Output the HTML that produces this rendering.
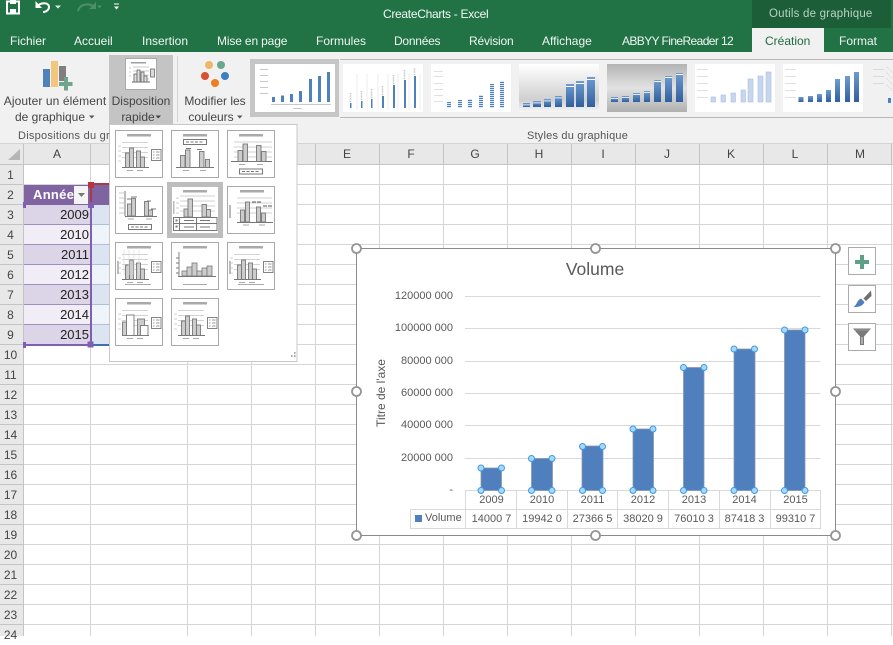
<!DOCTYPE html>
<html><head><meta charset="utf-8"><style>
html,body{margin:0;padding:0}
body{width:893px;height:636px;overflow:hidden;position:relative;background:#fff;font-family:"Liberation Sans",sans-serif;color:#444}
.a{position:absolute;white-space:nowrap}
.tab{position:absolute;top:33px;font-size:12px;line-height:16px;color:#f0f6f2;white-space:nowrap}
.rb{position:absolute;font-size:12px;line-height:16px;color:#444;text-align:center;white-space:nowrap}
.ch{position:absolute;top:145px;height:19px;line-height:19px;font-size:12px;color:#444;text-align:center}
.rh{position:absolute;left:0;width:21px;height:20px;line-height:20px;font-size:12px;color:#444;text-align:center}
.yr{position:absolute;left:25px;width:64px;height:19px;line-height:20px;font-size:13px;color:#222;text-align:right}
.ax{position:absolute;width:80px;left:373px;text-align:right;font-size:11px;line-height:14px;color:#595959}
.tb{position:absolute;width:51px;text-align:center;font-size:11px;line-height:14px;color:#595959}
</style></head><body>
<svg class="a" style="left:0;top:0" width="893" height="636" viewBox="0 0 893 636">
<defs>
<symbol id="b" viewBox="0 0 80 48"><g fill="#4f81bd"><rect x="17" y="33" width="3" height="5"/><rect x="26" y="31.500" width="3" height="6.500"/><rect x="35" y="30" width="3" height="8"/><rect x="44" y="27" width="3" height="11"/><rect x="54" y="15" width="3" height="23"/><rect x="63" y="12" width="3" height="26"/><rect x="72" y="8" width="3" height="30"/></g><g fill="#bbb"><rect x="5" y="5" width="8" height=".8"/><rect x="5" y="11" width="8" height=".8"/><rect x="5" y="17" width="8" height=".8"/><rect x="5" y="23" width="8" height=".8"/><rect x="5" y="29" width="8" height=".8"/><rect x="16" y="40" width="60" height=".8"/><rect x="38" y="44" width="9" height=".8"/></g></symbol>
<linearGradient id="g1" x1="0" y1="0" x2="0" y2="1"><stop offset="0" stop-color="#fff"/><stop offset=".75" stop-color="#cfcfcf"/><stop offset="1" stop-color="#f6f6f6"/></linearGradient>
<linearGradient id="g2" x1="0" y1="0" x2="0" y2="1"><stop offset="0" stop-color="#b4b4b4"/><stop offset=".5" stop-color="#e2e2e2"/><stop offset="1" stop-color="#b0b0b0"/></linearGradient>
<linearGradient id="g3" x1="0" y1="0" x2="0" y2="1"><stop offset="0" stop-color="#6f9bd0"/><stop offset="1" stop-color="#2f5f9e"/></linearGradient>
<pattern id="st" width="3" height="2" patternUnits="userSpaceOnUse"><rect width="3" height="1.200" fill="#4f81bd"/></pattern>
</defs>
<!-- green bar -->
<rect x="0" y="0" width="893" height="52" fill="#217346"/>
<rect x="752" y="0" width="139" height="28" fill="#1b5e38"/>
<rect x="752" y="28" width="72" height="24" fill="#f1f1f1"/>
<!-- ribbon -->
<rect x="0" y="52" width="893" height="92" fill="#f1f1f1"/>
<rect x="109" y="55" width="64" height="70" fill="#c4c4c4"/>
<rect x="177" y="56" width="1" height="66" fill="#d2d2d2"/>
<!-- QAT save -->
<path d="M7 1.500H19V13.500H7Z" fill="none" stroke="#fff" stroke-width="2"/><rect x="10" y="9" width="6" height="4" fill="#fff"/><rect x="10" y="0" width="6" height="4" fill="#fff"/>
<path d="M37 7C40 2 49 2 49 7C49 10 46 12 43 12" fill="none" stroke="#fff" stroke-width="2"/><path d="M35.500 1V8H42Z" fill="#fff"/>
<path d="M55 5.500h6l-3 3z" fill="#dfeee5"/>
<path d="M94 7C91 3 80 3 78 11" fill="none" stroke="#4b8f6b" stroke-width="2"/><path d="M96 2V9H89Z" fill="#4b8f6b"/>
<path d="M97 5.500h5l-2.500 3z" fill="#4b8f6b"/>
<rect x="114" y="3.500" width="5" height="1" fill="#fff"/><path d="M114 6.500h5l-2.500 3z" fill="#fff"/>
<!-- Ajouter icon -->
<rect x="43" y="69" width="7" height="18" fill="#4f81bd"/><rect x="51" y="61" width="7" height="26" fill="#f0c77d"/><rect x="59" y="66" width="7" height="15" fill="#7f7f7f"/>
<path d="M64 77h4v5h4.500v4h-4.500v4.500h-4v-4.500h-5v-4h5z" fill="#6ea58c"/>
<!-- disposition icon -->
<rect x="125.500" y="58.500" width="31" height="31" fill="#fff" stroke="#a8a8a8"/>
<rect x="131" y="62" width="15" height="1.500" fill="#a0a0a0"/>
<path d="M133 67h16M133 71h16M133 75h16M133 79h16M129 68h2M129 72h2M129 76h2" stroke="#bbb" stroke-width=".8"/>
<path d="M132 82h18" stroke="#666"/>
<g fill="#ddd" stroke="#666" stroke-width=".8"><rect x="134" y="74" width="3" height="8"/><rect x="137" y="70" width="3" height="12"/><rect x="141" y="72" width="3" height="10"/><rect x="144" y="76" width="3" height="6"/><rect x="150.500" y="69" width="4" height="8"/></g>
<!-- colours -->
<circle cx="209" cy="65" r="4" fill="#f0b668"/><circle cx="221" cy="65" r="4" fill="#6aa88e"/><circle cx="205" cy="76" r="4" fill="#d9502e"/><circle cx="225" cy="76" r="4" fill="#3e7fc1"/><circle cx="215" cy="83" r="4" fill="#ee7d23"/>
<!-- dropdown arrows -->
<path d="M89 115.500h5.500l-2.750 3z" fill="#555"/><path d="M155.500 115.500h5.500l-2.750 3z" fill="#444"/><path d="M237 115.500h5.500l-2.750 3z" fill="#555"/>
<!-- gallery -->
<rect x="250" y="59" width="89" height="58" fill="#c6c6c6"/>
<rect x="255" y="64" width="80" height="48" fill="#fff"/><use href="#b" x="255" y="64" width="80" height="48"/>
<rect x="343" y="64" width="80" height="48" fill="#fff"/>
<g fill="#4f81bd"><rect x="350" y="103" width="1.500" height="5"/><rect x="361" y="101" width="1.500" height="7"/><rect x="371" y="99" width="1.500" height="9"/><rect x="382" y="96" width="2" height="12"/><rect x="393" y="85" width="2" height="23"/><rect x="404" y="80" width="2" height="28"/><rect x="414" y="76" width="2" height="32"/></g>
<g stroke="#e2e2e2" stroke-width=".6"><path d="M357 74v36M367 74v36M378 74v36M388 74v36M398 74v36M409 74v36M420 74v36"/></g>
<path d="M350.500 102v-9M361.500 100v-9M371.500 98v-9M382.500 95v-9M393.500 84v-9M404.500 79v-9M414.500 75v-7" stroke="#c4c4c4" stroke-width="1.500" stroke-dasharray="1 .6"/>
<rect x="431" y="64" width="80" height="48" fill="#fff"/>
<g fill="#ccc"><rect x="434" y="71" width="9" height=".6"/><rect x="434" y="76" width="9" height=".6"/><rect x="434" y="83" width="9" height=".6"/><rect x="434" y="89" width="9" height=".6"/><rect x="434" y="95" width="9" height=".6"/><rect x="434" y="101" width="9" height=".6"/></g>
<g fill="url(#st)"><rect x="447" y="102" width="4" height="6"/><rect x="458" y="100" width="4" height="8"/><rect x="468" y="99" width="4" height="9"/><rect x="479" y="95" width="4" height="13"/><rect x="490" y="84" width="4" height="24"/><rect x="500" y="81" width="4" height="27"/><rect x="502" y="0" width="0" height="0"/></g>
<rect x="519" y="64" width="80" height="48" fill="url(#g1)"/>
<g fill="url(#g3)"><rect x="523" y="103" width="7" height="4"/><rect x="533" y="101" width="8" height="6"/><rect x="544" y="99" width="7" height="8"/><rect x="555" y="96" width="7" height="11"/><rect x="566" y="84" width="8" height="23"/><rect x="576" y="81" width="8" height="26"/><rect x="587" y="77" width="8" height="30"/></g>
<g fill="#fff"><rect x="523" y="104.500" width="7" height=".8"/><rect x="533" y="102.500" width="8" height=".8"/><rect x="544" y="100.500" width="7" height=".8"/><rect x="555" y="97.500" width="7" height=".8"/><rect x="566" y="86" width="8" height="1"/><rect x="576" y="83" width="8" height="1"/><rect x="587" y="79" width="8" height="1"/></g>
<rect x="607" y="64" width="80" height="48" fill="url(#g2)"/>
<g fill="url(#g3)"><rect x="611" y="97" width="7" height="5"/><rect x="622" y="96" width="7" height="6"/><rect x="633" y="93" width="7" height="9"/><rect x="644" y="91" width="6" height="11"/><rect x="654" y="80" width="7" height="22"/><rect x="665" y="76" width="7" height="26"/><rect x="676" y="73" width="7" height="29"/></g>
<g fill="#fff"><rect x="611" y="98" width="7" height=".8"/><rect x="622" y="97" width="7" height=".8"/><rect x="633" y="94" width="7" height=".8"/><rect x="644" y="92" width="6" height=".8"/><rect x="654" y="81" width="7" height="1"/><rect x="665" y="77" width="7" height="1"/><rect x="676" y="74" width="7" height="1"/></g>
<rect x="695" y="64" width="80" height="48" fill="#fff"/>
<g fill="#c6d6ee" stroke="#a9c0e2" stroke-width=".6"><rect x="711" y="97" width="4.500" height="5"/><rect x="721" y="95" width="4.500" height="7"/><rect x="731" y="93" width="4.500" height="9"/><rect x="741" y="90" width="4.500" height="12"/><rect x="748" y="79" width="5" height="23"/><rect x="758" y="76" width="5" height="26"/><rect x="766" y="72" width="5" height="30"/></g>
<g fill="#ccc"><rect x="697" y="69" width="11" height=".6"/><rect x="697" y="76" width="11" height=".6"/><rect x="697" y="83" width="11" height=".6"/><rect x="697" y="90" width="11" height=".6"/><rect x="697" y="97" width="11" height=".6"/></g>
<rect x="783" y="64" width="80" height="48" fill="#fff"/>
<g fill="url(#g3)"><rect x="798.500" y="97" width="5" height="5"/><rect x="808" y="96" width="5" height="6"/><rect x="817" y="94" width="5" height="8"/><rect x="826" y="90" width="5" height="12"/><rect x="835" y="79" width="5" height="23"/><rect x="845" y="76" width="5" height="26"/><rect x="854" y="72" width="5" height="30"/></g>
<g fill="#ccc"><rect x="785" y="69" width="11" height=".6"/><rect x="785" y="76" width="11" height=".6"/><rect x="785" y="83" width="11" height=".6"/><rect x="785" y="90" width="11" height=".6"/><rect x="785" y="97" width="11" height=".6"/></g>
<g fill="#ccc"><rect x="873" y="69" width="11" height=".6"/><rect x="873" y="76" width="11" height=".6"/><rect x="873" y="83" width="11" height=".6"/></g><path d="M886 66l7 7M886 72l7 7M886 78l7 7M886 84l7 7" stroke="#d8d8d8" stroke-width=".6"/><rect x="888" y="98" width="3" height="5" fill="#4f81bd"/>
<path d="M340 59.500H893M340 117.500H893" stroke="#b8b8b8"/>
<!-- ribbon bottom & header row -->
<rect x="0" y="143" width="893" height="1" fill="#d4d4d4"/>
<rect x="0" y="144" width="893" height="21" fill="#e8e8e8"/>
<rect x="0" y="164" width="24" height="472" fill="#e8e8e8"/>
<path d="M20 149V160H8Z" fill="#b6b6b6"/>
<!-- grid -->
<g stroke="#d6d6d6" stroke-width="1" shape-rendering="crispEdges">
<path d="M24 184.500H893M24 204.500H893M24 224.500H893M24 244.500H893M24 264.500H893M24 284.500H893M24 304.500H893M24 324.500H893M24 344.500H893M24 364.500H893M24 384.500H893M24 404.500H893M24 424.500H893M24 444.500H893M24 464.500H893M24 484.500H893M24 504.500H893M24 524.500H893M24 544.500H893M24 564.500H893M24 584.500H893M24 604.500H893M24 624.500H893"/>
<path d="M90.500 165V636M187.500 165V636M251.500 165V636M315.500 165V636M379.500 165V636M443.500 165V636M507.500 165V636M571.500 165V636M635.500 165V636M699.500 165V636M763.500 165V636M827.500 165V636M891.500 165V636"/>
</g>
<g stroke="#c4c4c4" shape-rendering="crispEdges">
<path d="M23.500 144V636M90.500 144V164M187.500 144V164M251.500 144V164M315.500 144V164M379.500 144V164M443.500 144V164M507.500 144V164M571.500 144V164M635.500 144V164M699.500 144V164M763.500 144V164M827.500 144V164M891.500 144V164M0 164.500H893"/>
<path d="M0 184.500H23M0 204.500H23M0 224.500H23M0 244.500H23M0 264.500H23M0 284.500H23M0 304.500H23M0 324.500H23M0 344.500H23M0 364.500H23M0 384.500H23M0 404.500H23M0 424.500H23M0 444.500H23M0 464.500H23M0 484.500H23M0 504.500H23M0 524.500H23M0 544.500H23M0 564.500H23M0 584.500H23M0 604.500H23M0 624.500H23"/>
</g>
<!-- table -->
<rect x="24" y="185" width="66" height="20" fill="#8064a2"/><rect x="91" y="185" width="24" height="20" fill="#8064a2"/>
<rect x="24" y="205" width="66" height="20" fill="#dcd5e8"/><rect x="24" y="225" width="66" height="20" fill="#f0edf6"/><rect x="24" y="245" width="66" height="20" fill="#dcd5e8"/><rect x="24" y="265" width="66" height="20" fill="#f0edf6"/><rect x="24" y="285" width="66" height="20" fill="#dcd5e8"/><rect x="24" y="305" width="66" height="20" fill="#f0edf6"/><rect x="24" y="325" width="66" height="20" fill="#dcd5e8"/>
<rect x="91" y="205" width="24" height="20" fill="#dce4f2"/><rect x="91" y="225" width="24" height="20" fill="#eff3fa"/><rect x="91" y="245" width="24" height="20" fill="#dce4f2"/><rect x="91" y="265" width="24" height="20" fill="#eff3fa"/><rect x="91" y="285" width="24" height="20" fill="#dce4f2"/><rect x="91" y="305" width="24" height="20" fill="#eff3fa"/><rect x="91" y="325" width="24" height="20" fill="#dce4f2"/>
<path d="M24 224.500H90M24 244.500H90M24 264.500H90M24 284.500H90M24 304.500H90M24 324.500H90" stroke="#a08fbc" shape-rendering="crispEdges"/>
<path d="M91 224.500H115M91 244.500H115M91 264.500H115M91 284.500H115M91 304.500H115M91 324.500H115" stroke="#b0c0dc" shape-rendering="crispEdges"/>
<rect x="74" y="186" width="14" height="18" fill="#f4f4f4"/><path d="M78 193h7l-3.500 4z" fill="#777"/>
<rect x="24" y="344" width="67" height="2" fill="#7f5fb0"/><rect x="90" y="205" width="2" height="140" fill="#7f5fb0"/>
<rect x="92" y="344" width="20" height="2" fill="#3f6fb5"/>
<rect x="92" y="183" width="20" height="2" fill="#a83a4a"/><rect x="90" y="184" width="2" height="20" fill="#a83a4a"/>
<rect x="88" y="182" width="6" height="6" fill="#b8333f"/>
<rect x="88" y="202" width="6" height="6" fill="#7f5fb0"/><rect x="23" y="202" width="3" height="6" fill="#7f5fb0"/>
<rect x="23" y="342" width="3" height="6" fill="#7f5fb0"/><rect x="87.500" y="341.500" width="6" height="6" fill="#7f5fb0"/>
<!-- chart -->
<rect x="356.500" y="248.500" width="479" height="287" fill="#fff" stroke="#8a8a8a"/>
<path d="M465 296.500H820.500M465 328.500H820.500M465 361.500H820.500M465 393.500H820.500M465 425.500H820.500M465 458.500H820.500" stroke="#d9d9d9" shape-rendering="crispEdges"/>
<path d="M465 490.500H820.500V528.500H410.500V509.500H820.500M465.500 490V528M516.500 490V528M567.500 490V528M617.500 490V528M668.500 490V528M719.500 490V528M770.500 490V528" fill="none" stroke="#d9d9d9" shape-rendering="crispEdges"/>
<g fill="#4f7fbd" stroke="#8c98a8" stroke-width=".8"><rect x="481" y="468" width="20.500" height="22.500"/><rect x="531.500" y="458.500" width="21" height="32"/><rect x="582" y="446" width="21" height="44.500"/><rect x="633" y="429" width="20.500" height="61.500"/><rect x="683.500" y="367.500" width="20.500" height="123"/><rect x="734" y="349" width="21" height="141.500"/><rect x="784.500" y="330" width="20.500" height="160.500"/></g>
<rect x="415" y="515" width="7" height="7" fill="#4f7fbd"/>
<g fill="#a9d6fb" stroke="#3a9be6" stroke-width="1">
<circle cx="481" cy="468" r="3"/><circle cx="501.500" cy="468" r="3"/><circle cx="481" cy="490.500" r="3"/><circle cx="501.500" cy="490.500" r="3"/>
<circle cx="531.500" cy="458.500" r="3"/><circle cx="552" cy="458.500" r="3"/><circle cx="531.500" cy="490.500" r="3"/><circle cx="552" cy="490.500" r="3"/>
<circle cx="582.500" cy="446.500" r="3"/><circle cx="602.500" cy="446.500" r="3"/><circle cx="582.500" cy="490.500" r="3"/><circle cx="602.500" cy="490.500" r="3"/>
<circle cx="633" cy="429" r="3"/><circle cx="653" cy="429" r="3"/><circle cx="633" cy="490.500" r="3"/><circle cx="653" cy="490.500" r="3"/>
<circle cx="683.500" cy="367.500" r="3"/><circle cx="704" cy="367.500" r="3"/><circle cx="683.500" cy="490.500" r="3"/><circle cx="704" cy="490.500" r="3"/>
<circle cx="734" cy="349" r="3"/><circle cx="754.500" cy="349" r="3"/><circle cx="734" cy="490.500" r="3"/><circle cx="754.500" cy="490.500" r="3"/>
<circle cx="784.500" cy="330" r="3"/><circle cx="805" cy="330" r="3"/><circle cx="784.500" cy="490.500" r="3"/><circle cx="805" cy="490.500" r="3"/>
</g>
<g fill="#fff" stroke="#959595" stroke-width="1.800">
<circle cx="356.500" cy="248.500" r="4.500"/><circle cx="595.500" cy="248.500" r="4.500"/><circle cx="835.500" cy="248.500" r="4.500"/><circle cx="356.500" cy="391.500" r="4.500"/><circle cx="835.500" cy="391.500" r="4.500"/><circle cx="356.500" cy="535.500" r="4.500"/><circle cx="595.500" cy="535.500" r="4.500"/><circle cx="835.500" cy="535.500" r="4.500"/>
</g>
<!-- side buttons -->
<g fill="#fff" stroke="#ababab"><rect x="848.500" y="247.500" width="27" height="27"/><rect x="848.500" y="285.500" width="27" height="27"/><rect x="848.500" y="323.500" width="27" height="27"/></g>
<path d="M860 255h4v5h5v4h-5v5h-4v-5h-5v-4h5z" fill="#5f9f86"/>
<path d="M871 290.500L871.500 296L866 301L863.500 298.500Z" fill="#6e6e6e"/><path d="M853.500 307C857 305 857 300 861 298.500L864.500 302C863 306 858 307.500 853.500 307Z" fill="#4f7fbd"/>
<path d="M853 328.500H871L864 336.500V345H860V336.500Z" fill="#7a7a7a"/><path d="M855 330H869" stroke="#9a9a9a"/><rect x="861.500" y="337" width="1" height="7" fill="#ddd"/>
<!-- menu -->
<rect x="109.500" y="124.500" width="187.500" height="237" fill="#fff" stroke="#c8c8c8"/>
<rect x="167" y="182" width="56" height="56" fill="#bdbdbd"/>
<g fill="#fff" stroke="#a9a9a9"><rect x="115.500" y="130.500" width="47" height="47"/><rect x="171.500" y="130.500" width="47" height="47"/><rect x="227.500" y="130.500" width="47" height="47"/><rect x="115.500" y="186.500" width="47" height="47"/><rect x="172" y="187" width="46" height="46" stroke="none"/><rect x="227.500" y="186.500" width="47" height="47"/><rect x="115.500" y="242.500" width="47" height="47"/><rect x="171.500" y="242.500" width="47" height="47"/><rect x="227.500" y="242.500" width="47" height="47"/><rect x="115.500" y="298.500" width="47" height="47"/><rect x="171.500" y="298.500" width="47" height="47"/></g>
<!-- thumb base + bars -->
<g id="t0"><rect x="127" y="134" width="24" height="2.500" fill="#aaa"/><path d="M122 142.500h26M122 147.500h26M122 152.500h26M122 157.500h26M118 146h3M118 151h3M118 156h3M118 161h3" stroke="#c4c4c4" stroke-width=".8"/><path d="M122 167.500h27" stroke="#777"/><path d="M127 170.500h6M137 170.500h6" stroke="#aaa"/><rect x="151.500" y="149.500" width="9.500" height="11" fill="#fff" stroke="#777" stroke-width=".9"/><path d="M153 152h1.500M156 152h3.500M153 155h1.500M156 155h3.500M153 158h1.500M156 158h3.500" stroke="#777" stroke-width=".8"/></g>
<g id="t1b" fill="#ccc" stroke="#777" stroke-width=".9"><rect x="125.500" y="153" width="4" height="14.500"/><rect x="129.500" y="148" width="4" height="19.500"/><rect x="136.500" y="151" width="4" height="16.500"/><rect x="140.500" y="157" width="4" height="10.500"/></g>
<use href="#t0" y="112"/><use href="#t1b" y="112"/>
<use href="#t0" x="112" y="112"/><use href="#t1b" x="112" y="112"/>
<use href="#t0" y="168"/>
<use href="#t0" x="56" y="168"/><use href="#t1b" x="56" y="168"/>
<!-- thumb 2 -->
<rect x="183" y="134" width="24" height="2.500" fill="#aaa"/><rect x="183.500" y="139.500" width="23" height="5" fill="#fff" stroke="#777"/><path d="M186 142h18" stroke="#777" stroke-dasharray="3 1.500"/><path d="M186 148.500h5M197 149.500h5" stroke="#777"/><path d="M176 167.500h38" stroke="#777"/><g fill="#ccc" stroke="#777" stroke-width=".9"><rect x="180.500" y="155.500" width="4.500" height="12"/><rect x="185.500" y="150" width="4.500" height="17.500"/><rect x="199.500" y="151.500" width="4.500" height="16"/><rect x="205.500" y="159.500" width="4" height="8"/></g><path d="M183 170.500h6M200 170.500h6" stroke="#aaa"/>
<!-- thumb 3 -->
<rect x="239" y="134" width="24" height="2.500" fill="#aaa"/><path d="M234 142h38M234 147h38M234 152h38M234 157h38" stroke="#c4c4c4" stroke-width=".8"/><path d="M231 161.500h41" stroke="#777"/><g fill="#ccc" stroke="#777" stroke-width=".9"><rect x="238" y="150.500" width="4.500" height="11"/><rect x="243" y="144" width="4.500" height="17.500"/><rect x="256.500" y="145.500" width="4.500" height="16"/><rect x="261.500" y="151.500" width="4.500" height="10"/></g><path d="M239 164.500h6M257 164.500h6" stroke="#aaa"/><rect x="239.500" y="169" width="23" height="5" fill="#fff" stroke="#777"/><path d="M242 171.500h18" stroke="#777" stroke-dasharray="3 1.500"/>
<!-- thumb 4 -->
<path d="M119 193h5M119 198h5M119 203h5M119 208h5M119 213h5" stroke="#bbb" stroke-width=".8"/><path d="M125 191v25" stroke="#777"/><path d="M125 216.500h32" stroke="#777"/><path d="M127 199h5M131 197h6M147 201h4M151 209h5" stroke="#777"/><g fill="#ccc" stroke="#777" stroke-width=".9"><rect x="127.500" y="204" width="4" height="12"/><rect x="131.500" y="198.500" width="4" height="17.500"/><rect x="144.500" y="201.500" width="4" height="14.500"/><rect x="148.500" y="210" width="4" height="6"/></g><path d="M128 219h6M146 219h6" stroke="#aaa"/><rect x="128.500" y="224.500" width="23" height="5" fill="#fff" stroke="#777"/><path d="M131 227h18" stroke="#777" stroke-dasharray="3 1.500"/>
<!-- thumb 5 selected -->
<rect x="183" y="190" width="24" height="2.500" fill="#aaa"/><path d="M180 196h35M180 201h35M180 206h35M180 211h35" stroke="#c4c4c4" stroke-width=".8"/><rect x="173" y="201" width="1.500" height="13" fill="#bbb"/><path d="M176 198h3M176 203h3M176 208h3M176 213h3" stroke="#bbb" stroke-width=".8"/><g fill="#ccc" stroke="#777" stroke-width=".9"><rect x="184" y="209" width="4" height="8"/><rect x="188" y="199" width="4.500" height="18"/><rect x="202" y="204.500" width="4.500" height="12.500"/><rect x="206.500" y="209.500" width="4" height="7.500"/></g><rect x="173.500" y="217.500" width="43.500" height="13" fill="#fff" stroke="#777"/><path d="M174 223.500h43M179.500 218v12M196.500 218v12" stroke="#777"/><path d="M184 220.500h10M184 227h10M200 220.500h10M200 227h10" stroke="#777"/><rect x="175.500" y="219.500" width="2" height="2" fill="#777"/><rect x="175.500" y="225.500" width="2" height="2" fill="#777"/>
<!-- thumb 6 -->
<rect x="240" y="190" width="24" height="2.500" fill="#aaa"/><path d="M237 198h35M237 203h35M237 208h35M237 213h35" stroke="#c4c4c4" stroke-width=".8"/><rect x="229" y="205" width="2" height="13" fill="#bbb"/><path d="M237 222.500h36" stroke="#777"/><path d="M252 202h10M263 206h9" stroke="#555" stroke-dasharray="4 1"/><g fill="#ccc" stroke="#777" stroke-width=".9"><rect x="240.500" y="210" width="4" height="12"/><rect x="245.500" y="202" width="4" height="20"/><rect x="256.500" y="207" width="4" height="15"/><rect x="261.500" y="213" width="4" height="9"/></g><path d="M243 225h6M259 225h6" stroke="#aaa"/>
<!-- thumb 7 extras -->
<rect x="117" y="261" width="2" height="13" fill="#bbb"/><path d="M124 250v25M129 250v25M134 250v25M139 250v25" stroke="#dcdcdc" stroke-width=".7"/><rect x="125" y="284" width="26" height="1" fill="#aaa"/>
<!-- thumb 8 -->
<rect x="183" y="246" width="24" height="2.500" fill="#aaa"/><path d="M179 252v25M179 258h-3M179 263h-3M179 268h-3M179 273h-3" stroke="#777" stroke-width=".9"/><path d="M178 276.500h38" stroke="#777"/><g fill="#ccc" stroke="#777" stroke-width=".8"><rect x="182" y="271" width="5" height="5"/><rect x="187" y="267" width="5" height="9"/><rect x="192" y="263" width="5" height="13"/><rect x="197" y="271" width="5" height="5"/><rect x="202" y="268" width="5" height="8"/><rect x="207" y="266" width="5" height="10"/></g><rect x="183" y="284" width="24" height="1" fill="#aaa"/>
<!-- thumb 9 extras --><rect x="229" y="261" width="2" height="13" fill="#bbb"/><rect x="238" y="284" width="26" height="1" fill="#aaa"/>
<!-- thumb 10 bars -->
<g stroke="#777" stroke-width=".9"><rect x="122.500" y="322" width="4" height="13.500" fill="#ccc"/><rect x="126.500" y="315" width="7.500" height="20.500" fill="#fff"/><rect x="137.500" y="319" width="7" height="16.500" fill="#ccc"/><rect x="140.500" y="325.500" width="7.500" height="10" fill="#fff"/></g>
<path d="M291 356h1.500M294 356h1.500M294 353h1.500" stroke="#888" stroke-width="1.500"/>
</svg>
<!-- title / tabs -->
<div class="a" style="left:383px;top:6px;font-size:12px;line-height:16px;color:#f3f8f5;letter-spacing:-.3px">CreateCharts - Excel</div>
<div class="a" style="left:769px;top:6px;font-size:11.500px;line-height:16px;color:#b9d2c4;letter-spacing:.2px">Outils de graphique</div>
<div class="tab" style="left:10px">Fichier</div><div class="tab" style="left:74px">Accueil</div><div class="tab" style="left:142px">Insertion</div><div class="tab" style="left:217px;letter-spacing:-.15px">Mise en page</div><div class="tab" style="left:316px">Formules</div><div class="tab" style="left:394px;letter-spacing:-.25px">Données</div><div class="tab" style="left:469px;letter-spacing:-.2px">Révision</div><div class="tab" style="left:542px">Affichage</div><div class="tab" style="left:622px;letter-spacing:-.6px">ABBYY FineReader 12</div>
<div class="tab" style="left:765px;color:#1f6b41">Création</div><div class="tab" style="left:839px">Format</div>
<!-- ribbon labels -->
<div class="rb" style="left:0;width:110px;top:93px;letter-spacing:.1px">Ajouter un élément</div>
<div class="rb" style="left:0;width:100px;top:109px">de graphique</div>
<div class="rb" style="left:109px;width:64px;top:93px">Disposition</div>
<div class="rb" style="left:109px;width:58px;top:109px">rapide</div>
<div class="rb" style="left:180px;width:70px;top:93px">Modifier les</div>
<div class="rb" style="left:180px;width:62px;top:109px">couleurs</div>
<div class="rb" style="left:18px;top:128px;font-size:11px;color:#555;letter-spacing:.25px;width:92px;overflow:hidden;text-align:left">Dispositions du graphique</div>
<div class="rb" style="left:527px;top:128px;font-size:11px;color:#555;letter-spacing:.2px">Styles du graphique</div>
<!-- col heads -->
<div class="ch" style="left:24px;width:66px">A</div><div class="ch" style="left:315px;width:64px">E</div><div class="ch" style="left:379px;width:64px">F</div><div class="ch" style="left:443px;width:64px">G</div><div class="ch" style="left:507px;width:64px">H</div><div class="ch" style="left:571px;width:64px">I</div><div class="ch" style="left:635px;width:64px">J</div><div class="ch" style="left:699px;width:64px">K</div><div class="ch" style="left:763px;width:64px">L</div><div class="ch" style="left:827px;width:66px">M</div>
<!-- rows -->
<div class="rh" style="top:165px">1</div><div class="rh" style="top:185px">2</div><div class="rh" style="top:205px">3</div><div class="rh" style="top:225px">4</div><div class="rh" style="top:245px">5</div><div class="rh" style="top:265px">6</div><div class="rh" style="top:285px">7</div><div class="rh" style="top:305px">8</div><div class="rh" style="top:325px">9</div><div class="rh" style="top:345px">10</div><div class="rh" style="top:365px">11</div><div class="rh" style="top:385px">12</div><div class="rh" style="top:405px">13</div><div class="rh" style="top:425px">14</div><div class="rh" style="top:445px">15</div><div class="rh" style="top:465px">16</div><div class="rh" style="top:485px">17</div><div class="rh" style="top:505px">18</div><div class="rh" style="top:525px">19</div><div class="rh" style="top:545px">20</div><div class="rh" style="top:565px">21</div><div class="rh" style="top:585px">22</div><div class="rh" style="top:605px">23</div><div class="rh" style="top:625px">24</div>
<!-- data -->
<div class="a" style="left:33px;top:185px;font-size:13px;line-height:20px;font-weight:bold;color:#fff;letter-spacing:.3px">Année</div>
<div class="yr" style="top:205px">2009</div><div class="yr" style="top:225px">2010</div><div class="yr" style="top:245px">2011</div><div class="yr" style="top:265px">2012</div><div class="yr" style="top:285px">2013</div><div class="yr" style="top:305px">2014</div><div class="yr" style="top:325px">2015</div>
<!-- chart text -->
<div class="a" style="left:356px;width:478px;top:260px;text-align:center;font-size:17.500px;line-height:18px;color:#595959">Volume</div>
<div class="ax" style="top:289px">120000 000</div><div class="ax" style="top:321px">100000 000</div><div class="ax" style="top:354px">80000 000</div><div class="ax" style="top:386px">60000 000</div><div class="ax" style="top:418px">40000 000</div><div class="ax" style="top:451px">20000 000</div><div class="ax" style="top:483px">-</div>
<div class="a" style="left:331px;top:386px;width:100px;text-align:center;font-size:12px;line-height:14px;color:#595959;transform:rotate(-90deg)">Titre de l'axe</div>
<div class="tb" style="left:466px;top:492.500px">2009</div><div class="tb" style="left:516.500px;top:492.500px">2010</div><div class="tb" style="left:567px;top:492.500px">2011</div><div class="tb" style="left:617.500px;top:492.500px">2012</div><div class="tb" style="left:668.500px;top:492.500px">2013</div><div class="tb" style="left:719px;top:492.500px">2014</div><div class="tb" style="left:770px;top:492.500px">2015</div>
<div class="a" style="left:425px;top:510.500px;font-size:11px;line-height:14px;color:#595959">Volume</div>
<div class="tb" style="left:466px;top:511.500px">14000 7</div><div class="tb" style="left:516.500px;top:511.500px">19942 0</div><div class="tb" style="left:567px;top:511.500px">27366 5</div><div class="tb" style="left:617.500px;top:511.500px">38020 9</div><div class="tb" style="left:668.500px;top:511.500px">76010 3</div><div class="tb" style="left:719px;top:511.500px">87418 3</div><div class="tb" style="left:770px;top:511.500px">99310 7</div>
</body></html>
